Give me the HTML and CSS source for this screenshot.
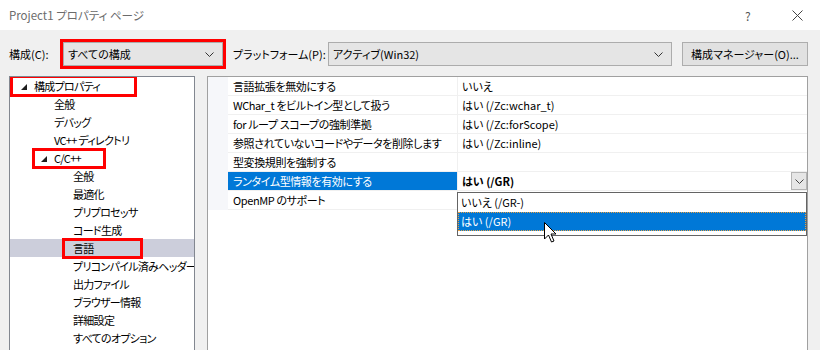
FILE: index.html
```html
<!DOCTYPE html>
<html lang="ja">
<head>
<meta charset="utf-8">
<title>Project1 プロパティ ページ</title>
<link rel="stylesheet" href="styles.css">
</head>
<body>
<div class="window">
  <div class="titlebar">
    <span class="title">Project1 プロパティ ページ</span>
    <span class="help">?</span>
    <span class="close"><svg width="11" height="11" viewBox="0 0 11 11"><path d="M0.5 0.5 L10.5 10.5 M10.5 0.5 L0.5 10.5" stroke="#444" stroke-width="1" fill="none"/></svg></span>
  </div>

  <div class="toolbar">
    <span class="lbl lbl-config">構成(C):</span>
    <div class="combo combo-config">
      <span class="combo-text">すべての構成</span>
      <svg class="chev" width="9" height="5" viewBox="0 0 9 5"><polyline points="0.5,0.5 4.5,4.5 8.5,0.5" stroke="#333" stroke-width="1" fill="none"/></svg>
    </div>
    <span class="lbl lbl-platform">プラットフォーム(P):</span>
    <div class="combo combo-platform">
      <span class="combo-text">アクティブ(Win32)</span>
      <svg class="chev" width="9" height="5" viewBox="0 0 9 5"><polyline points="0.5,0.5 4.5,4.5 8.5,0.5" stroke="#333" stroke-width="1" fill="none"/></svg>
    </div>
    <button class="btn">構成マネージャー(O)...</button>
  </div>

  <div class="panels">
    <div class="tree">
      <div class="node lv0"><span class="tri"><svg width="6" height="6" viewBox="0 0 6 6"><polygon points="6,0 6,6 0,6" fill="#1e1e1e"/></svg></span>構成プロパティ<span class="mark mark-props"></span></div>
      <div class="node lv1">全般</div>
      <div class="node lv1">デバッグ</div>
      <div class="node lv1">VC++ ディレクトリ</div>
      <div class="node lv1 exp"><span class="tri"><svg width="6" height="6" viewBox="0 0 6 6"><polygon points="6,0 6,6 0,6" fill="#1e1e1e"/></svg></span>C/C++<span class="mark mark-cpp"></span></div>
      <div class="node lv2">全般</div>
      <div class="node lv2">最適化</div>
      <div class="node lv2">プリプロセッサ</div>
      <div class="node lv2">コード生成</div>
      <div class="node lv2 sel">言語<span class="mark mark-lang"></span></div>
      <div class="node lv2">プリコンパイル済みヘッダー</div>
      <div class="node lv2">出力ファイル</div>
      <div class="node lv2">ブラウザー情報</div>
      <div class="node lv2">詳細設定</div>
      <div class="node lv2">すべてのオプション</div>
    </div>

    <div class="grid">
      <div class="prow"><span class="gut"></span><span class="pname">言語拡張を無効にする</span><span class="pval">いいえ</span></div>
      <div class="prow"><span class="gut"></span><span class="pname">WChar_t をビルトイン型として扱う</span><span class="pval">はい (/Zc:wchar_t)</span></div>
      <div class="prow"><span class="gut"></span><span class="pname">for ループ スコープの強制準拠</span><span class="pval">はい (/Zc:forScope)</span></div>
      <div class="prow"><span class="gut"></span><span class="pname">参照されていないコードやデータを削除します</span><span class="pval">はい (/Zc:inline)</span></div>
      <div class="prow"><span class="gut"></span><span class="pname">型変換規則を強制する</span><span class="pval"></span></div>
      <div class="prow active"><span class="gut"></span><span class="pname">ランタイム型情報を有効にする</span><span class="pval"><b>はい (/GR)</b><span class="ddbtn"><svg width="9" height="5" viewBox="0 0 9 5"><polyline points="0.5,0.5 4.5,4.5 8.5,0.5" stroke="#444" stroke-width="1" fill="none"/></svg></span></span></div>
      <div class="prow"><span class="gut"></span><span class="pname">OpenMP のサポート</span><span class="pval"></span></div>

      <div class="dropdown">
        <div class="opt">いいえ (/GR-)</div>
        <div class="opt cur">はい (/GR)</div>
      </div>
    </div>
  </div>

  <svg class="cursor" width="14" height="22" viewBox="0 0 14 22"><path d="M0.5 0.5 L0.5 17 L4.5 13 L7.5 20 L10 19 L7 12 L12 12 Z" fill="#fff" stroke="#000" stroke-width="1" stroke-linejoin="miter"/></svg>
</div>
</body>
</html>
```

FILE: styles.css
```css
* { box-sizing: border-box; }
html, body { margin: 0; padding: 0; }
body {
  width: 820px;
  height: 350px;
  overflow: hidden;
  background: #f0f0f0;
  font-family: "Noto Sans CJK JP", "Noto Sans", sans-serif;
  font-size: 11px;
  font-feature-settings: "palt" 1;
  color: #000;
}
.window {
  position: relative;
  width: 820px;
  height: 350px;
  overflow: hidden;
}

/* title bar */
.titlebar {
  height: 30px;
  background: #fff;
  display: flex;
  align-items: center;
  padding-left: 9px;
}
.title {
  color: #6b6b6b;
  font-size: 11.5px;
  line-height: 16px;
  flex: 1;
}
.help {
  color: #555;
  font-size: 12px;
  width: 10px;
  margin-right: 37px;
}
.close {
  display: flex;
  width: 11px;
  height: 11px;
  margin-right: 17px;
}

/* toolbar */
.toolbar {
  display: flex;
  align-items: center;
  padding: 12px 0 0 9px;
  height: 36px;
}
.lbl { white-space: nowrap; line-height: 16px; }
.lbl-config { width: 54px; }
.lbl-platform { width: 95px; margin-left: 10px; }
.combo {
  height: 24px;
  background: #e5e5e5;
  border: 1px solid #acacac;
  display: flex;
  align-items: center;
  padding: 0 8px 0 4px;
}
.combo-text { flex: 1; line-height: 16px; white-space: nowrap; }
.combo-config {
  width: 160px;
  outline: 3px solid #ff0000;
  outline-offset: 0;
}
.combo-platform { width: 344px; }
.chev { display: block; }
.btn {
  margin-left: 10px;
  width: 126px;
  height: 24px;
  background: #e1e1e1;
  border: 1px solid #adadad;
  font: inherit;
  color: #000;
  padding: 0;
  line-height: 16px;
}

/* panels */
.panels {
  display: flex;
  margin-top: 10px;
  padding-left: 9px;
  gap: 12px;
  height: 300px;
}
.tree {
  width: 186px;
  background: #fff;
  border: 1px solid #828790;
  overflow: hidden;
}
.node {
  position: relative;
  height: 18px;
  line-height: 18px;
  white-space: nowrap;
  display: flex;
  align-items: center;
  letter-spacing: -0.7px;
}
.lv0 { padding-left: 10px; }
.lv1 { padding-left: 44px; }
.lv1.exp { padding-left: 30px; }
.lv2 { padding-left: 63px; }
.tri {
  display: inline-flex;
  width: 14px;
  height: 18px;
  align-items: center;
  padding-left: 1px;
  padding-top: 1px;
}
.sel { background: #cccedb; }
.mark {
  position: absolute;
  border: 3px solid #ff0000;
  height: 22px;
  top: -2px;
}
.mark-props { left: 0; width: 127px; }
.mark-cpp { left: 22px; width: 74px; top: -1px; height: 21px; }
.mark-lang { left: 52px; width: 81px; top: -1px; height: 21px; }

/* property grid */
.grid {
  position: relative;
  width: 601px;
  background: #fff;
  border: 1px solid #a0a0a0;
}
.prow {
  display: grid;
  grid-template-columns: 20px 230px 1fr;
  height: 19px;
}
.gut { background: #f6f7fa; }
.pname, .pval {
  border-bottom: 1px solid #f0f0f0;
  line-height: 18px;
  white-space: nowrap;
  overflow: hidden;
}
.pname {
  padding-left: 5px;
  border-right: 1px solid #f0f0f0;
  letter-spacing: -0.4px;
}
.pval {
  padding-left: 4px;
  display: flex;
  align-items: center;
}
.pval b { flex: 1; font-weight: 700; }
.active .pname { background: #0078d7; color: #fff; }
.ddbtn {
  width: 16px;
  height: 18px;
  background: #e6e6e6;
  border: 1px solid #b4b4b4;
  display: flex;
  align-items: center;
  justify-content: center;
  align-self: flex-start;
}

.dropdown {
  position: absolute;
  left: 249px;
  top: 115px;
  width: 350px;
  height: 44px;
  background: #fff;
  border: 1px solid #646464;
}
.opt {
  height: 19px;
  line-height: 18px;
  padding-left: 3px;
  white-space: nowrap;
}
.opt.cur {
  background: #0078d7;
  color: #fff;
  border: 1px dotted #e8a040;
  padding-left: 2px;
  line-height: 17px;
}

.cursor {
  position: absolute;
  left: 544px;
  top: 222px;
}
```
